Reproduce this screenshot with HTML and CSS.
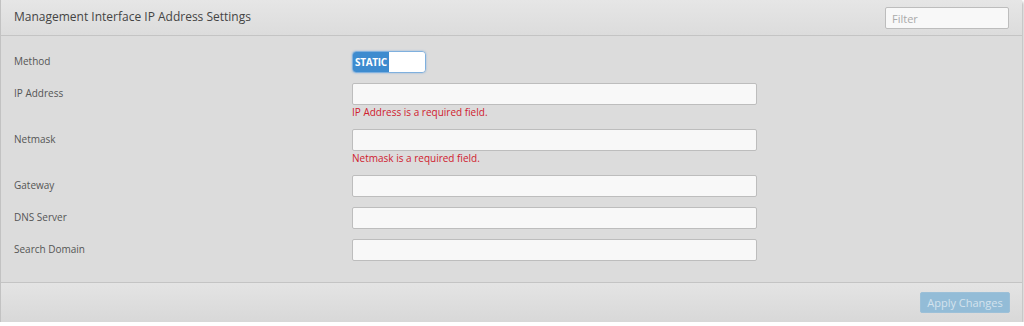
FILE: index.html
```html
<!DOCTYPE html>
<html lang="en">
<head>
    <meta charset="UTF-8">
    <title>Management Interface IP Address Settings</title>
    <link rel="stylesheet" href="styles.css">
</head>
<body>
    <div class="panel">
        <div class="panel-header">
            <h1>Management Interface IP Address Settings</h1>
            <input class="filter" type="text" placeholder="Filter">
        </div>

        <div class="panel-body">
            <div class="row">
                <label>Method</label>
                <div class="field">
                    <div class="toggle">
                        <span class="toggle-on">STATIC</span>
                        <span class="toggle-off"></span>
                    </div>
                </div>
            </div>
            <div class="row">
                <label>IP Address</label>
                <div class="field">
                    <input type="text">
                    <div class="error">IP Address is a required field.</div>
                </div>
            </div>
            <div class="row">
                <label>Netmask</label>
                <div class="field">
                    <input type="text">
                    <div class="error">Netmask is a required field.</div>
                </div>
            </div>
            <div class="row">
                <label>Gateway</label>
                <div class="field"><input type="text"></div>
            </div>
            <div class="row">
                <label>DNS Server</label>
                <div class="field"><input type="text"></div>
            </div>
            <div class="row">
                <label>Search Domain</label>
                <div class="field"><input type="text"></div>
            </div>
        </div>

        <div class="panel-footer">
            <button class="apply-btn" disabled>Apply Changes</button>
        </div>
    </div>
</body>
</html>
```

FILE: styles.css
```css
body {
    margin: 0;
    background: #fff;
    font-family: "Open Sans", "DejaVu Sans", sans-serif;
    color: #555;
}
.panel {
    width: 1021px;
    border-left: 1px solid #c2c2c2;
    background: #dcdcdc;
    box-shadow: 1px 2px 3px rgba(0, 0, 0, 0.35);
}
.panel-header {
    height: 35px;
    display: flex;
    align-items: center;
    justify-content: space-between;
    padding: 0 13px 0 13px;
    background: linear-gradient(#e6e6e6, #dcdcdc);
    border-bottom: 1px solid #c4c4c4;
}
.panel-header h1 {
    margin: 0 0 2px;
    font-size: 12px;
    font-weight: normal;
    color: #444;
}
.filter {
    width: 124px;
    height: 22px;
    box-sizing: border-box;
    border: 1px solid #bdbdbd;
    border-radius: 2px;
    background: #f8f8f8;
    padding: 0 6px;
    font-family: inherit;
    font-size: 11px;
    margin-top: 1px;
}
.filter::placeholder {
    color: #aaa;
}
.panel-body {
    padding: 15px 0 21px 13px;
    display: flex;
    flex-direction: column;
    gap: 10px;
}
.row {
    display: flex;
}
.row label {
    width: 338px;
    font-size: 10px;
    line-height: 20px;
    color: #555;
}
.field input {
    display: block;
    width: 405px;
    height: 22px;
    box-sizing: border-box;
    border: 1px solid #bdbdbd;
    border-radius: 2px;
    background: #f8f8f8;
    margin: 0;
}
.error {
    color: #d0202e;
    font-size: 10px;
    line-height: 13px;
    padding-top: 1px;
}
.toggle {
    display: flex;
    width: 74px;
    height: 22px;
    box-sizing: border-box;
    border: 1px solid #7fb0de;
    border-radius: 4px;
    overflow: hidden;
    box-shadow: 0 0 2px rgba(80, 150, 220, 0.6);
}
.toggle-on {
    width: 36px;
    background: #3d8bcf;
    color: #fff;
    font-size: 10px;
    font-weight: bold;
    line-height: 20px;
    text-align: center;
    letter-spacing: -0.3px;
}
.toggle-off {
    flex: 1;
    background: #fff;
}
.panel-footer {
    height: 39px;
    display: flex;
    align-items: center;
    justify-content: flex-end;
    padding-right: 12px;
    border-top: 1px solid #c4c4c4;
    background: linear-gradient(#e4e4e4, #d8d8d8);
}
.apply-btn {
    width: 90px;
    height: 21px;
    border: 1px solid #9cc0d8;
    border-radius: 2px;
    background: #93bcd7;
    color: #d3e3ee;
    font-family: inherit;
    font-size: 11px;
    padding: 0;
}
```
